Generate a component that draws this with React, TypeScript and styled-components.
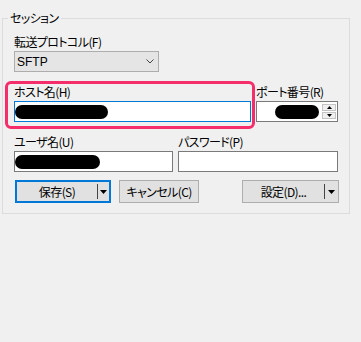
import React from "react";
import styled, { createGlobalStyle } from "styled-components";

const Global = createGlobalStyle`
  html, body { margin: 0; padding: 0; background: #f0f0f0; }
  body {
    font-family: "Noto Sans CJK JP", "Noto Sans", sans-serif;
    font-size: 12px;
    font-feature-settings: "palt" 1;
    letter-spacing: -0.6px;
    color: #000;
  }
`;

const Page = styled.div`
  width: 361px;
  height: 342px;
  box-sizing: border-box;
  padding: 18px 0 0 2px;
  background: #f0f0f0;
`;

const Group = styled.section`
  position: relative;
  width: 348px;
  height: 196px;
  box-sizing: border-box;
  border: 1px solid #dcdcdc;
  padding: 16px 10px 10px 11px;
  display: flex;
  flex-direction: column;
`;

const Legend = styled.span`
  position: absolute;
  top: -8px;
  left: 5px;
  padding: 0 2px;
  background: #f0f0f0;
  line-height: 14px;
  white-space: nowrap;
`;

const Row = styled.div<{ $mt?: number; $gap?: number }>`
  display: flex;
  align-items: flex-start;
  gap: ${(p) => p.$gap ?? 5}px;
  margin-top: ${(p) => p.$mt ?? 0}px;
`;

const Field = styled.div<{ $w: number; $highlight?: boolean }>`
  position: relative;
  width: ${(p) => p.$w}px;
  display: flex;
  flex-direction: column;
  gap: 2px;
  ${(p) =>
    p.$highlight &&
    `
    &::before {
      content: "";
      position: absolute;
      top: -4px;
      left: -9px;
      right: -4px;
      bottom: -7px;
      border: 3px solid #f52d6b;
      border-radius: 6px;
      pointer-events: none;
    }
  `}
`;

const Label = styled.div`
  line-height: 14px;
  height: 14px;
  white-space: nowrap;
`;

const Combo = styled.div`
  width: 145px;
  height: 21px;
  box-sizing: border-box;
  border: 1px solid #adadad;
  background: #e5e5e5;
  display: flex;
  align-items: center;
  justify-content: space-between;
  padding: 0 4px 0 2px;
  font-family: "Liberation Sans", Arial, sans-serif;
  font-size: 12px;
  letter-spacing: 0;
`;

const Edit = styled.div<{ $focused?: boolean }>`
  height: 21px;
  box-sizing: border-box;
  border: 1px solid ${(p) => (p.$focused ? "#0078d7" : "#7a7a7a")};
  background: #fff;
  display: flex;
  align-items: center;
  padding: 0 1px 0 0;
`;

const Redact = styled.span<{ $w: number }>`
  display: block;
  width: ${(p) => p.$w}px;
  height: 14px;
  border-radius: 7px;
  background: #000;
`;

const PortEdit = styled(Edit)`
  justify-content: flex-end;
  gap: 3px;
`;

const Spinner = styled.div`
  display: flex;
  flex-direction: column;
  gap: 1px;
`;

const SpinBtn = styled.div`
  width: 14px;
  height: 7px;
  box-sizing: border-box;
  border: 1px solid #c4c4c4;
  background: #f0f0f0;
  display: flex;
  align-items: center;
  justify-content: center;
`;

const Button = styled.div<{ $w: number; $default?: boolean; $ml?: number; $auto?: boolean }>`
  width: ${(p) => p.$w}px;
  height: 23px;
  box-sizing: border-box;
  border: ${(p) => (p.$default ? "2px solid #0078d7" : "1px solid #adadad")};
  background: #e1e1e1;
  display: flex;
  align-items: center;
  margin-left: ${(p) => (p.$auto ? "auto" : `${p.$ml ?? 0}px`)};
  line-height: 14px;
  white-space: nowrap;
`;

const ButtonText = styled.span`
  flex: 1;
  text-align: center;
`;

const Divider = styled.span`
  width: 1px;
  height: 15px;
  background: #444;
`;

const ArrowArea = styled.span<{ $w: number }>`
  width: ${(p) => p.$w}px;
  display: flex;
  align-items: center;
  justify-content: center;
`;

const DownTri = () => (
  <svg width="7" height="4" viewBox="0 0 7 4">
    <polygon points="0,0 7,0 3.5,4" fill="#000" />
  </svg>
);

const Chevron = () => (
  <svg width="8" height="5" viewBox="0 0 8 5">
    <polyline points="0.5,0.5 4,4 7.5,0.5" fill="none" stroke="#444" strokeWidth="1" />
  </svg>
);

const TinyUp = () => (
  <svg width="5" height="3" viewBox="0 0 5 3">
    <polygon points="0,3 5,3 2.5,0" fill="#000" />
  </svg>
);
const TinyDown = () => (
  <svg width="5" height="3" viewBox="0 0 5 3">
    <polygon points="0,0 5,0 2.5,3" fill="#000" />
  </svg>
);

export default function App() {
  return (
    <Page>
      <Global />
      <Group>
        <Legend>セッション</Legend>
        <Field $w={145}>
          <Label>転送プロトコル(F)</Label>
          <Combo>
            <span>SFTP</span>
            <Chevron />
          </Combo>
        </Field>

        <Row $mt={13}>
          <Field $w={237} $highlight>
            <Label>ホスト名(H)</Label>
            <Edit $focused>
              <Redact $w={93} />
            </Edit>
          </Field>
          <Field $w={82}>
            <Label>ポート番号(R)</Label>
            <PortEdit>
              <Redact $w={44} />
              <Spinner>
                <SpinBtn>
                  <TinyUp />
                </SpinBtn>
                <SpinBtn>
                  <TinyDown />
                </SpinBtn>
              </Spinner>
            </PortEdit>
          </Field>
        </Row>

        <Row $mt={13}>
          <Field $w={159}>
            <Label>ユーザ名(U)</Label>
            <Edit>
              <Redact $w={85} />
            </Edit>
          </Field>
          <Field $w={160}>
            <Label>パスワード(P)</Label>
            <Edit />
          </Field>
        </Row>

        <Row $mt={8} $gap={0}>
          <Button $w={96} $default $ml={1}>
            <ButtonText>保存(S)</ButtonText>
            <Divider />
            <ArrowArea $w={11}>
              <DownTri />
            </ArrowArea>
          </Button>
          <Button $w={80} $ml={8}>
            <ButtonText>キャンセル(C)</ButtonText>
          </Button>
          <Button $w={97} $auto>
            <ButtonText>設定(D)...</ButtonText>
            <Divider />
            <ArrowArea $w={13}>
              <DownTri />
            </ArrowArea>
          </Button>
        </Row>
      </Group>
    </Page>
  );
}
